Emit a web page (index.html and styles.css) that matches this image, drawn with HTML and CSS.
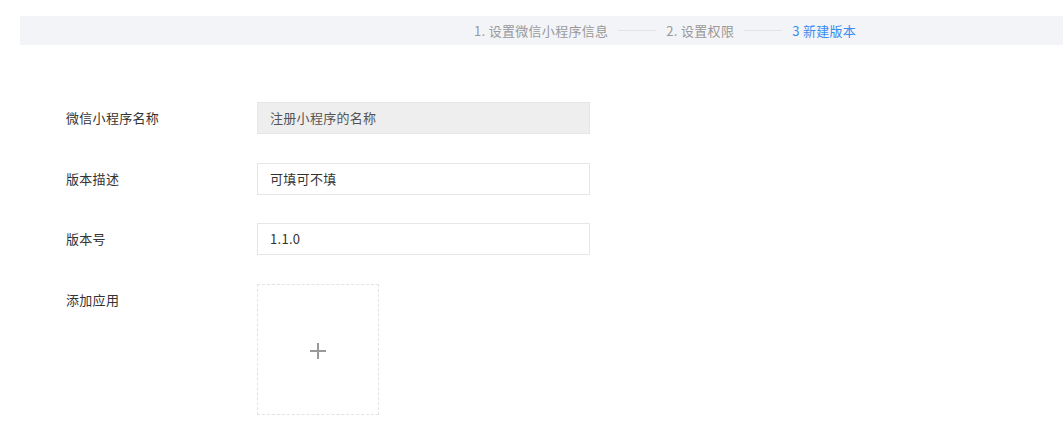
FILE: index.html
```html
<!DOCTYPE html>
<html lang="zh-CN">
<head>
<meta charset="utf-8">
<link rel="stylesheet" href="styles.css">
</head>
<body>
<div class="steps">
  <span class="step">1. 设置微信小程序信息</span>
  <span class="line"></span>
  <span class="step">2. 设置权限</span>
  <span class="line"></span>
  <span class="step active">3 新建版本</span>
</div>
<div class="form">
  <div class="label">微信小程序名称</div>
  <div class="input disabled">注册小程序的名称</div>
  <div class="label">版本描述</div>
  <div class="input">可填可不填</div>
  <div class="label">版本号</div>
  <div class="input">1.1.0</div>
  <div class="label">添加应用</div>
  <div class="upload">
    <svg width="18" height="18" viewBox="0 0 18 18"><path d="M9 1v16M1 9h16" stroke="#999" stroke-width="2" fill="none"/></svg>
  </div>
</div>
</body>
</html>
```
FILE: styles.css
```css
html, body {
  margin: 0;
  padding: 0;
  background: #fff;
  font-family: "Noto Sans CJK SC", "Noto Sans", sans-serif;
  font-size: 13px;
  letter-spacing: 0.3px;
  color: #333;
}
.steps {
  margin: 16px 0 0 20px;
  height: 29px;
  background: #f3f4f8;
  display: flex;
  align-items: center;
  padding-left: 454px;
  box-sizing: border-box;
}
.step {
  color: #999;
  white-space: nowrap;
}
.step.active {
  color: #3c8cf0;
}
.line {
  width: 38px;
  height: 1px;
  background: #e3e3e3;
  margin: 0 10px;
}
.form {
  display: grid;
  grid-template-columns: 191px 333px;
  grid-template-rows: 32px 32px 32px auto;
  row-gap: 28.67px;
  padding: 57px 0 0 66px;
}
.label {
  line-height: 32px;
  color: #333;
}
.input {
  height: 32px;
  box-sizing: border-box;
  border: 1px solid #e6e6e6;
  padding-left: 12px;
  line-height: 30px;
  color: #333;
}
.input.disabled {
  background: #eeeeee;
  color: #555;
}
.upload {
  width: 122px;
  height: 131px;
  box-sizing: border-box;
  border: 1px dashed #e3e3e3;
  padding-top: 3px;
  display: flex;
  align-items: center;
  justify-content: center;
}
```
